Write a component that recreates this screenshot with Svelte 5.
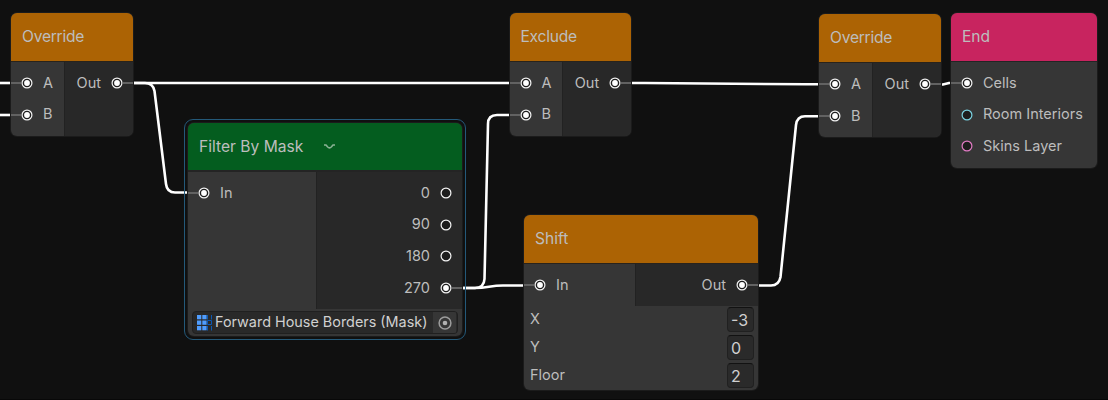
<script>
  const white = '#f4f4f4';
  const nodes = [
    { id: 'ov1', title: 'Override', kind: 'orange', x: 11, y: 13, w: 122, h: 123, left: 53, tight: true,
      ins: [{ t: 'A', on: true }, { t: 'B', on: true }], outs: [{ t: 'Out', on: true }] },
    { id: 'mask', title: 'Filter By Mask', kind: 'green', x: 188, y: 123, w: 274, h: 213, left: 128, selected: true,
      ins: [{ t: 'In', on: true }],
      outs: [{ t: '0' }, { t: '90' }, { t: '180' }, { t: '270', on: true }],
      asset: 'Forward House Borders (Mask)' },
    { id: 'ex', title: 'Exclude', kind: 'orange', x: 509.5, y: 13, w: 121.7, h: 123, left: 52.5, tight: true,
      ins: [{ t: 'A', on: true }, { t: 'B', on: true }], outs: [{ t: 'Out', on: true }] },
    { id: 'shift', title: 'Shift', kind: 'orange', x: 524, y: 215.4, w: 234, h: 174.6, left: 111,
      ins: [{ t: 'In', on: true }], outs: [{ t: 'Out', on: true }],
      fields: [['X', '-3'], ['Y', '0'], ['Floor', '2']] },
    { id: 'ov2', title: 'Override', kind: 'orange', x: 819, y: 14.4, w: 122, h: 123, left: 53, tight: true,
      ins: [{ t: 'A', on: true }, { t: 'B', on: true }], outs: [{ t: 'Out', on: true }] },
    { id: 'end', title: 'End', kind: 'pink', x: 951, y: 13, w: 146, h: 155, left: 146,
      ins: [{ t: 'Cells', on: true }, { t: 'Room Interiors', c: '#7bd3e2' }, { t: 'Skins Layer', c: '#e17bc4' }], outs: [] }
  ];
  const edges = [
    'M0 83H12', 'M0 115H12', 'M132 83H511',
    'M132 83H145Q153 83 154.5 91L166 184Q167 192.500 175 192.500H189',
    'M461 288H475Q484 288 484.500 279L488 124Q488 115 497 115H511',
    'M461 288H475C488 288 490 285.500 503 285.500H525',
    'M630 83H645L806 84.300H820',
    'M757 285.500H771Q779 285.500 780.500 277L796 125Q797 116.300 805 116.300H820',
    'M940 84.500L943 84.500L949 83H952'
  ];
</script>

{#snippet port(p)}
  <svg class="port" width="12" height="12" viewBox="0 0 12 12">
    <circle cx="6" cy="6" r="4.900" fill="#1d1d1d" stroke={p.c ?? white} stroke-width="1.200" />
    {#if p.on}<circle cx="6" cy="6" r="2.900" fill="#fff" />{/if}
  </svg>
{/snippet}

<div class="canvas">
  <svg class="edges" width="1108" height="400">
    {#each edges as d}<path {d} />{/each}
  </svg>
  {#each nodes as n (n.id)}
    <section class="node" class:selected={n.selected} style="left:{n.x}px;top:{n.y}px;width:{n.w}px;height:{n.h}px">
      <header class={n.kind}>
        <span class:tight={n.tight}>{n.title}</span>
        {#if n.asset}
          <svg class="chevron" width="11" height="6" viewBox="0 0 11 6"><path d="M0 1H2L3.500 2.800Q5.500 5 7.500 2.800L9 1H11" /></svg>
        {/if}
      </header>
      <div class="ports">
        <div class="col ins" style="width:{n.left}px">
          {#each n.ins as p}
            <div class="row"><i class="stub" class:off={!p.on}></i>{@render port(p)}<span>{p.t}</span></div>
          {/each}
        </div>
        {#if n.outs.length}
          <div class="col outs">
            {#each n.outs as p}
              <div class="row"><span>{p.t}</span>{@render port(p)}<i class="stub" class:off={!p.on}></i></div>
            {/each}
          </div>
        {/if}
      </div>
      {#if n.asset}
        <div class="asset">
          <div class="object">
            <svg class="grid" width="16" height="16" viewBox="0 0 16 16">
              <g fill="#4f9dff">
                {#each [0, 5.500, 11] as y}
                  <rect x="0" {y} width="4.300" height="4.300" /><rect x="5.300" {y} width="4.300" height="4.300" />
                {/each}
              </g>
              <path d="M10.500 0V4.500M14.500 0V4.500M10.500 11V15.500M14.500 11V15.500M10.500 5.500H14.500V9.500H10.500Z" fill="none" stroke="#0b58b4" />
            </svg>
            <span class="name">{n.asset}</span>
            <span class="pick">
              <svg width="14" height="14" viewBox="0 0 14 14"><circle cx="7" cy="7" r="5.900" fill="none" stroke="#9c9c9c" stroke-width="1.500" /><circle cx="7" cy="7" r="2.300" fill="#b0b0b0" /></svg>
            </span>
          </div>
        </div>
      {/if}
      {#if n.fields}
        <div class="fields">
          {#each n.fields as [label, value]}
            <div class="field"><label for={label}>{label}</label><output id={label}>{value}</output></div>
          {/each}
        </div>
      {/if}
    </section>
  {/each}
</div>

<style>
  :global(body) { margin: 0; background: #101010; }
  .canvas { position: relative; width: 1108px; height: 400px; overflow: hidden; background: #101010; font-family: Inter, sans-serif; color: #bdbdbd; }
  .canvas::after { content: ''; position: absolute; left: 0; right: 0; bottom: 0; height: 1px; background: #080808; }
  .edges { position: absolute; inset: 0; }
  .edges path { fill: none; stroke: #fff; stroke-width: 2.600; }
  .node { position: absolute; display: flex; flex-direction: column; border-radius: 6px; background: #363636; box-shadow: 0 0 0 1px #1b1b1b; }
  .node.selected::before { content: ''; position: absolute; inset: -4px; border: 1px solid #245979; border-radius: 9px; pointer-events: none; }
  header { flex: none; box-sizing: border-box; height: 48.600px; padding: 0 11px; display: flex; align-items: center; gap: 21px; border-bottom: 1px solid #242424; border-radius: 6px 6px 0 0; font-size: 15.600px; line-height: 20px; white-space: nowrap; background-clip: padding-box; }
  .tight { letter-spacing: -.25px; }
  .orange { background-color: #ac6304; border-bottom-color: #29231b; }
  .green { background-color: #045d1f; border-bottom-width: 2px; }
  .green > * { position: relative; top: .400px; }
  .pink { background-color: #c8245f; }
  .chevron path { fill: none; stroke: #8ab294; stroke-width: 1.600; }
  .ports { display: flex; flex: 1; min-height: 0; }
  .col { box-sizing: border-box; padding-top: 5.500px; flex: none; }
  .outs { flex: 1; background: #282828; border-left: 1px solid #222; border-bottom-right-radius: 6px; }
  .node:has(.asset) .outs, .node:has(.fields) .outs { border-radius: 0; }
  .row { height: 31.650px; display: flex; align-items: center; font-size: 14.500px; line-height: 18px; white-space: nowrap; }
  .row span { position: relative; top: -.300px; }
  .outs .row { justify-content: flex-end; }
  .port { flex: none; }
  .stub { width: 10px; height: 2px; background: #626262; flex: none; }
  .stub.off { background: none; }
  .ins .row span { margin-left: 10px; }
  .outs .row span { margin-right: 10px; }
  .asset { flex: none; height: 27px; box-sizing: border-box; padding: 2px 4px 2px; }
  .object { height: 23px; box-sizing: border-box; border: 1px solid #202020; border-radius: 4px; background: #292929; display: flex; align-items: center; padding: 0 1px 0 4px; overflow: hidden; }
  .grid { flex: none; }
  .name { margin-left: 2px; flex: 1; min-width: 0; font-size: 14.400px; line-height: 18px; padding-bottom: 1px; color: #d0d0d0; white-space: nowrap; }
  .pick { flex: none; width: 23px; height: 21px; background: #363636; display: grid; place-items: center; }
  .fields { flex: none; height: 84px; }
  .field { height: 28px; display: flex; justify-content: space-between; padding: 0 4.500px 0 6px; font-size: 14.500px; }
  .field label { line-height: 26px; }
  output { box-sizing: border-box; width: 27px; height: 25px; margin-top: 1px; padding-left: 3.500px; border: 1px solid #202020; border-top-color: #121212; border-radius: 4px; background: #2a2a2a; color: #d0d0d0; font-size: 16px; line-height: 24px; }
</style>
